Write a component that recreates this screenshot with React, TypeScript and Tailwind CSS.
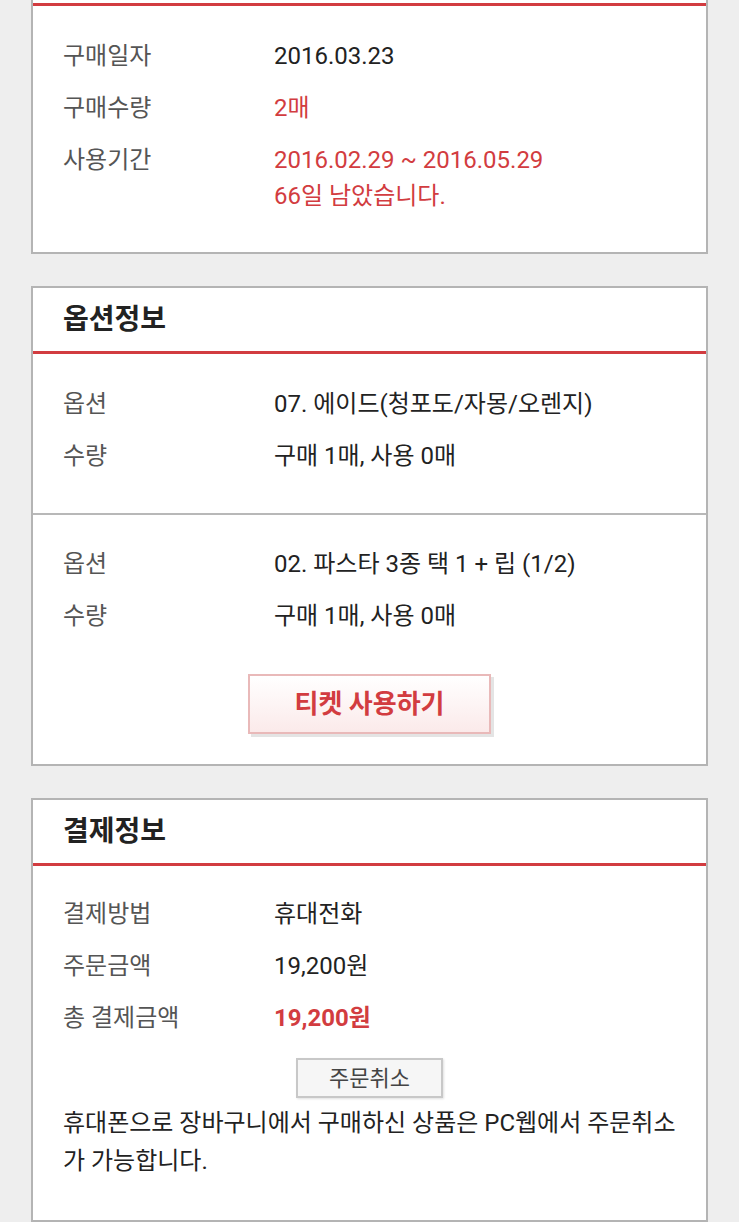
import type { ReactNode } from 'react'

const Row = ({ label, children, valueClass = 'text-[#222]' }: { label: string; children: ReactNode; valueClass?: string }) => (
  <div className="flex leading-[36px]">
    <div className="w-[211px] shrink-0 text-[#555]">{label}</div>
    <div className={valueClass}>{children}</div>
  </div>
)

const Card = ({ title, children }: { title: string; children: ReactNode }) => (
  <section className="bg-white border-2 border-[#b4b4b4]">
    <h2 className="h-[66px] flex items-center pl-[30px] text-[28px] font-bold text-[#222] border-b-[3px] border-[#d23c40]">
      {title}
    </h2>
    {children}
  </section>
)

export default function App() {
  return (
    <div className="min-h-[1222px] overflow-hidden bg-[#eeeeee] px-[31px] font-['Roboto','Noto_Sans_CJK_KR',sans-serif] text-[24px]">
      <div className="flex flex-col gap-8">
        {/* first card is scrolled past its header */}
        <section className="bg-white border-x-2 border-b-2 border-[#b4b4b4]">
          <div className="h-[6px] border-b-[3px] border-[#d23c40]" />
          <div className="flex flex-col gap-4 pl-[30px] pt-[32px] pb-[38px]">
            <Row label="구매일자">2016.03.23</Row>
            <Row label="구매수량" valueClass="text-[#d23c40]">2매</Row>
            <Row label="사용기간" valueClass="text-[#d23c40]">
              <div>2016.02.29 ~ 2016.05.29</div>
              <div>66일 남았습니다.</div>
            </Row>
          </div>
        </section>

        <Card title="옵션정보">
          <div className="flex flex-col gap-4 pl-[30px] pt-[32px] pb-[39px] border-b-2 border-[#b8b8b8]">
            <Row label="옵션">07. 에이드(청포도/자몽/오렌지)</Row>
            <Row label="수량">구매 1매, 사용 0매</Row>
          </div>
          <div className="pt-[31px] pb-[30px]">
            <div className="flex flex-col gap-4 pl-[30px]">
              <Row label="옵션">02. 파스타 3종 택 1 + 립 (1/2)</Row>
              <Row label="수량">구매 1매, 사용 0매</Row>
            </div>
            <div className="mt-[40px] flex justify-center">
              <button className="w-[243px] h-[60px] border-2 border-[#e9b9b9] bg-gradient-to-b from-white to-[#fbeaea] shadow-[3px_3px_0_#e4e4e4] text-[26px] font-bold text-[#d23c40]">
                티켓 사용하기
              </button>
            </div>
          </div>
        </Card>

        <Card title="결제정보">
          <div className="px-[30px] pt-[30px] pb-[40px]">
            <div className="flex flex-col gap-4">
              <Row label="결제방법">휴대전화</Row>
              <Row label="주문금액">19,200원</Row>
              <Row label="총 결제금액" valueClass="text-[#d23c40] font-bold">19,200원</Row>
            </div>
            <div className="mt-[22px] flex justify-center">
              <button className="w-[147px] h-[40px] border-2 border-[#c8c8c8] bg-[#f6f6f6] shadow-[1px_1px_2px_rgba(0,0,0,0.12)] text-[22px] text-[#444]">
                주문취소
              </button>
            </div>
            <p className="mt-[6px] leading-[38px] text-[#222]">
              휴대폰으로 장바구니에서 구매하신 상품은 PC웹에서 주문취소가 가능합니다.
            </p>
          </div>
        </Card>
      </div>
    </div>
  )
}
